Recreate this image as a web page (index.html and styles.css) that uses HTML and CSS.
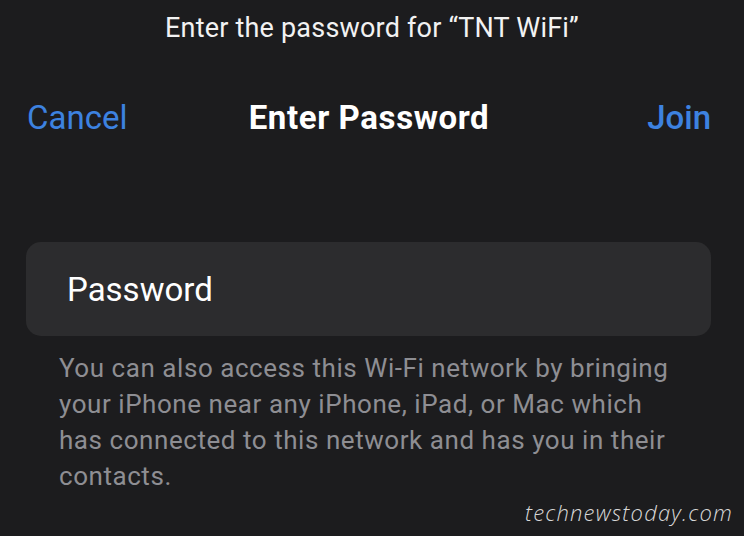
FILE: index.html
```html
<!DOCTYPE html>
<html lang="en">
<head>
  <meta charset="UTF-8">
  <meta name="viewport" content="width=device-width, initial-scale=1.0">
  <title>Enter Password</title>
  <link rel="stylesheet" href="styles.css">
</head>
<body>
  <div class="sheet">
    <p class="prompt">Enter the password for “TNT WiFi”</p>
    <div class="nav-bar">
      <span class="nav-btn cancel">Cancel</span>
      <span class="nav-title">Enter Password</span>
      <span class="nav-btn join">Join</span>
    </div>
    <div class="field">
      <span class="placeholder">Password</span>
    </div>
    <p class="hint">
      You can also access this Wi-Fi network by bringing your iPhone near any iPhone, iPad, or Mac which has connected to this network and has you in their contacts.
    </p>
    <div class="watermark">technewstoday.com</div>
  </div>
</body>
</html>
```

FILE: styles.css
```css
body { margin: 0; padding: 0; background-color: #1c1c1e; font-family: Roboto, "Liberation Sans", sans-serif; }
.sheet { width: 744px; height: 536px; overflow: hidden; }
.prompt {
  margin: 0; padding-top: 11px; text-align: center;
  color: #f2f2f2; font-size: 27px; line-height: 34px; letter-spacing: 0.2px;
}
.nav-bar {
  display: grid; grid-template-columns: 1fr auto 1fr; align-items: center;
  padding: 0 33px 0 27px; margin-top: 52px; height: 40px;
}
.nav-btn { color: #3d82e0; font-size: 33px; }
.nav-btn.join { font-weight: 500; justify-self: end; }
.nav-title { color: #fff; font-size: 33px; font-weight: 700; letter-spacing: 0.6px; }
.field {
  margin: 105px 33px 0 26px; height: 94px; background-color: #2c2c2e;
  border-radius: 15px; display: flex; align-items: center; padding-left: 41px;
}
.placeholder { color: #fff; font-size: 33px; }
.hint {
  margin: 14px 60px 0 59px; color: #8e8e93; font-size: 26px; line-height: 36px;
  letter-spacing: 0.55px;
}
.watermark {
  margin: 3px 11px 0 0; text-align: right; color: #d8d8d8;
  font-family: "Open Sans", sans-serif; font-style: italic; font-weight: 300;
  font-size: 22px; letter-spacing: 1.2px; line-height: 30px;
}
```
